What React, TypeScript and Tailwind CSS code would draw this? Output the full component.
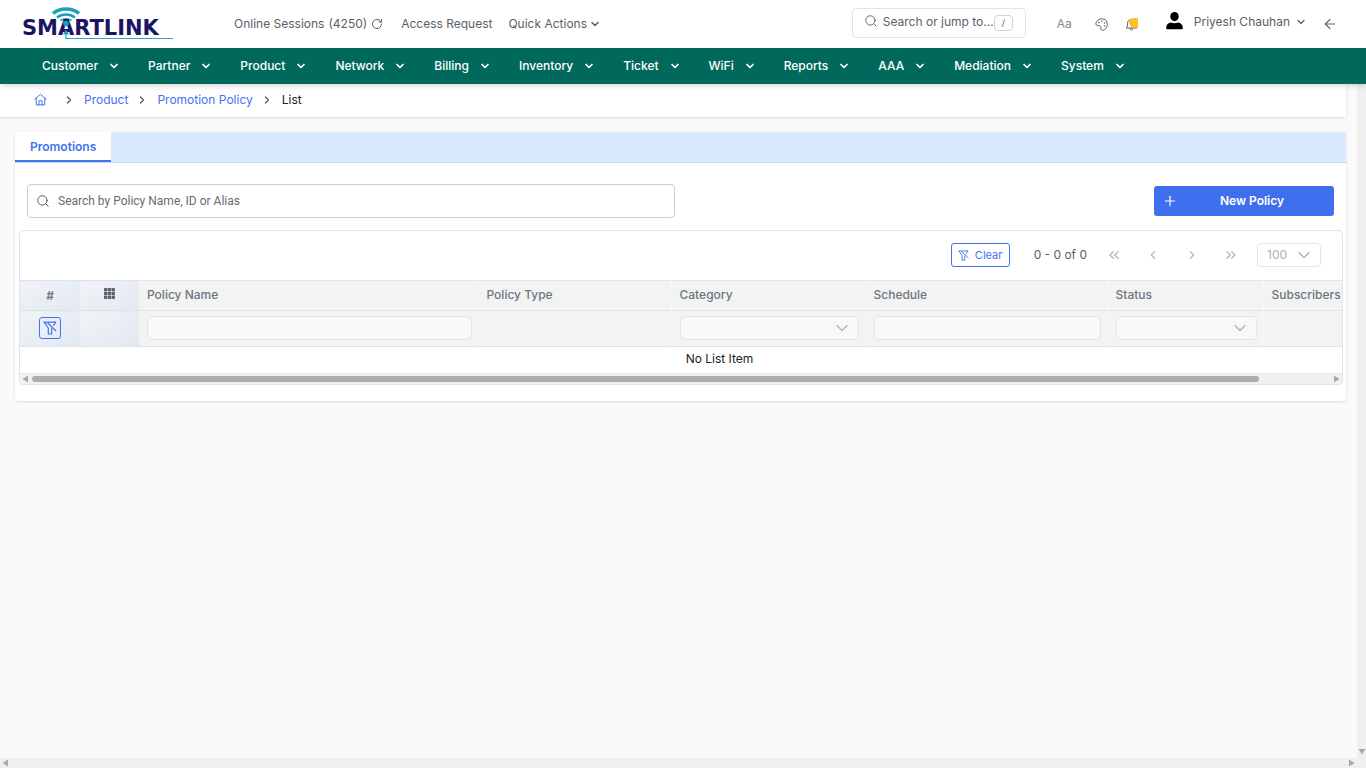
import type { ReactNode } from 'react';
import { ArrowLeft, ChevronDown, ChevronLeft, ChevronRight, ChevronsLeft, ChevronsRight, Plus, RotateCw, Search } from 'lucide-react';

const menuItems = [
  'Customer',
  'Partner',
  'Product',
  'Network',
  'Billing',
  'Inventory',
  'Ticket',
  'WiFi',
  'Reports',
  'AAA',
  'Mediation',
  'System',
];

const columns = [
  { name: 'Policy Name', width: 'w-[339px]', filter: 'text' },
  { name: 'Policy Type', width: 'w-[193px]', filter: 'none' },
  { name: 'Category', width: 'w-[194px]', filter: 'select' },
  { name: 'Schedule', width: 'w-[242px]', filter: 'text' },
  { name: 'Status', width: 'w-[156px]', filter: 'select' },
  { name: 'Subscribers', width: 'w-[156px]', filter: 'none' },
];

function Logo() {
  return (
    <svg width="162" height="36" viewBox="0 0 162 36" role="img" aria-label="Smartlink">
      <g fill="none" stroke="#1b9fbd">
        <path d="M40 7.5C47 1.500 59 1.500 66 7.5" strokeWidth="3.6" />
        <path d="M44 11.500C49 7.500 57 7.500 62 11.500" strokeWidth="2.4" />
        <path d="M47.500 14.500C50.500 12.300 55.500 12.300 58.500 14.500" strokeWidth="1.600" />
      </g>
      <text x="9" y="29" fontFamily="DejaVu Sans" fontWeight="700" fontSize="21" fill="#1b1464">
        SMARTLINK
      </text>
      <circle cx="53" cy="17.500" r="2.800" fill="#1b9fbd" />
      <path d="M53 26V32.500H160" fill="none" stroke="#2ba9c4" strokeWidth="1.200" />
      <path d="M50 28.500L53 23.500L56 28.500Z" fill="#1b9fbd" />
    </svg>
  );
}

function HomeIcon() {
  return (
    <svg width="13" height="13" viewBox="0 0 13 13" fill="none" stroke="currentColor" strokeLinecap="round" strokeLinejoin="round">
      <path d="M.7 6.300L6.500 1.300L12.300 6.300M2.300 5.200V11.900H10.700V5.200M5 11.700V7.700H8V11.700" />
    </svg>
  );
}

function FilterSlashIcon({ size }: { size: number }) {
  return (
    <svg width={size} height={size} viewBox="0 0 14 14" fill="none" stroke="currentColor" strokeWidth="1.200" strokeLinecap="round" strokeLinejoin="round">
      <path d="M5.500 1.200H12.800L10.500 4.300M3.500 1.200H1L5.300 7V13H8.700V7.500M4 1.200L12.800 9.800" />
    </svg>
  );
}

function PaletteIcon() {
  return (
    <svg width="13" height="13" viewBox="0 0 13 13" fill="none" stroke="currentColor" strokeLinejoin="round">
      <path d="M.8 5.600C1.400 2.500 4 .8 6.800.8C10 .8 12.300 3 12.300 6.200C12.300 9.800 10 12.300 7.300 12.300C5.300 12.300 6.400 9.800 5.400 8.300C4.300 6.900.4 8.200.8 5.600Z" />
      <g fill="currentColor" stroke="none">
        <circle cx="4" cy="4.600" r=".8" />
        <circle cx="6.800" cy="3.300" r=".8" />
        <circle cx="9.500" cy="5" r=".8" />
        <circle cx="9.600" cy="8" r=".8" />
      </g>
    </svg>
  );
}

function BellIcon() {
  return (
    <svg width="13" height="13" viewBox="0 0 13 13" fill="none" stroke="currentColor" strokeLinejoin="round">
      <path d="M1 10C2.500 9 2.500 7.500 2.500 5.500C2.500 3 4 1.500 6.500 1.500C9 1.500 10.500 3 10.500 5.500C10.500 7.500 10.500 9 12 10ZM5 10.300C5 12.500 8 12.500 8 10.300" />
    </svg>
  );
}

function UserIcon() {
  return (
    <svg width="17" height="18" viewBox="0 0 17 18" fill="#000" className="-mt-0.5">
      <ellipse cx="8.500" cy="4.600" rx="4.200" ry="4.600" />
      <path d="M.2 16.200C.2 12.500 2.500 10.800 5 10.500C7 11.600 10 11.600 12 10.500C14.500 10.800 16.800 12.500 16.800 16.200Q16.800 17.300 15.800 17.300H1.200Q.2 17.300 .2 16.200Z" />
    </svg>
  );
}

function GridIcon() {
  return (
    <svg width="11" height="11" viewBox="0 0 11 11" fill="#5d636c" className="mx-auto mb-1">
      {[0, 3.8, 7.6].map((x) => [0, 3.8, 7.6].map((y) => <rect key={`${x}-${y}`} x={x} y={y} width="3.3" height="3.3" rx=".4" />))}
    </svg>
  );
}

function ScrollArrow({ className }: { className: string }) {
  return (
    <svg width="6" height="8" viewBox="0 0 6 8" fill="#a9a9a9" className={className}>
      <path d="M6 .5V7.500L.5 4Z" />
    </svg>
  );
}

function PageButton({ label, children }: { label: string; children: ReactNode }) {
  return (
    <button type="button" aria-label={label} disabled className="flex h-6 w-6 items-center justify-center text-[#b4b7bc]">
      {children}
    </button>
  );
}

function SelectBox({ label }: { label: string }) {
  return (
    <div className="relative">
      <select aria-label={label} disabled className="block h-6 w-full appearance-none rounded border border-[#e3e5e6] bg-[#f8f8f8]" />
      <ChevronDown size={20} strokeWidth={1.7} className="pointer-events-none absolute top-0.5 right-[7px] text-[#b3b5b7]" />
    </div>
  );
}

function TopBar() {
  return (
    <header className="flex h-12 shrink-0 items-center bg-white pr-7 pl-[13px] text-[#5c6067]">
      <Logo />
      <div className="ml-[59px] flex items-center">
        <button type="button" className="flex items-center">
          <span>Online Sessions</span>
          <span className="ml-1">(4250)</span>
          <RotateCw size={12} strokeWidth={2} className="ml-1" />
        </button>
        <a href="#access" className="ml-[18px]">Access Request</a>
        <button type="button" className="ml-4 flex items-center gap-0.5">
          Quick Actions
          <ChevronDown size={12} strokeWidth={3} />
        </button>
      </div>
      <button type="button" className="mb-0.5 ml-auto flex h-[30px] w-[174px] items-center rounded border border-[#e1e3e6] pr-3 pl-[11px]">
        <Search size={14} strokeWidth={1.6} className="mb-1" />
        <span className="mb-0.5 ml-[5px]">Search or jump to...</span>
        <kbd className="ml-auto flex h-4 w-[19px] items-center justify-center rounded border border-[#cfd2d6] font-['Inter'] text-[9px]">/</kbd>
      </button>
      <button type="button" className="ml-[31px] text-[#83868b]">Aa</button>
      <button type="button" aria-label="Theme" className="ml-[23px]">
        <PaletteIcon />
      </button>
      <button type="button" aria-label="Notifications" className="relative ml-[17px]">
        <BellIcon />
        <span className="absolute top-0 right-0 h-[10px] w-[9px] rounded-tl-sm rounded-bl-md bg-[#fbc02d]" />
      </button>
      <button type="button" className="mb-1 ml-7 flex items-center">
        <UserIcon />
        <span className="ml-[11px]">Priyesh Chauhan</span>
        <ChevronDown size={12} strokeWidth={2.5} className="ml-[5px]" />
      </button>
      <button type="button" aria-label="Back" className="ml-[15px]">
        <ArrowLeft size={16} strokeWidth={1.8} />
      </button>
    </header>
  );
}

function MainMenu() {
  return (
    <nav className="z-10 flex h-9 shrink-0 items-center gap-7 bg-[#00695c] pl-[42px] font-medium text-white shadow-md">
      {menuItems.map((item) => (
        <button key={item} type="button" className="flex items-center gap-2.5">
          {item}
          <ChevronDown size={12} strokeWidth={3.5} />
        </button>
      ))}
    </nav>
  );
}

function Breadcrumb() {
  return (
    <nav aria-label="Breadcrumb" className="mr-[11px] flex h-[33px] items-center bg-white pb-0.5 pl-[34px] text-[#4272ee] shadow">
      <a href="#home" aria-label="Home">
        <HomeIcon />
      </a>
      <ChevronRight size={12} strokeWidth={2.5} className="ml-4 text-[#555]" />
      <a href="#product" className="ml-[9px]">Product</a>
      <ChevronRight size={12} strokeWidth={2.5} className="mr-[9px] ml-2 text-[#555]" />
      <a href="#policy">Promotion Policy</a>
      <ChevronRight size={12} strokeWidth={2.5} className="mr-[9px] ml-2 text-[#555]" />
      <span className="text-[#222]">List</span>
    </nav>
  );
}

function Paginator() {
  return (
    <div className="flex h-[49px] items-center justify-end pr-[21px] pb-px text-[#5c6067]">
      <button type="button" className="flex h-6 w-[59px] items-center justify-center gap-1.5 rounded-[3px] border border-[#4272ee] text-[11px] text-[#4272ee]">
        <FilterSlashIcon size={11} />
        Clear
      </button>
      <span className="ml-6">0 - 0 of 0</span>
      <div className="ml-[15px] flex gap-[15px]">
        <PageButton label="First page"><ChevronsLeft size={16} /></PageButton>
        <PageButton label="Previous page"><ChevronLeft size={14} /></PageButton>
        <PageButton label="Next page"><ChevronRight size={14} /></PageButton>
        <PageButton label="Last page"><ChevronsRight size={16} /></PageButton>
      </div>
      <div className="relative ml-[14px]">
        <select aria-label="Rows per page" disabled className="block h-6 w-16 appearance-none rounded border border-[#e4e6e8] pl-[9px] text-[#adb0b4] opacity-100">
          <option>100</option>
        </select>
        <ChevronDown size={20} strokeWidth={1.7} className="pointer-events-none absolute top-0.5 right-[7px] text-[#b3b5b7]" />
      </div>
    </div>
  );
}

function PolicyTable() {
  return (
    <div className="mr-[3px] ml-1 overflow-hidden rounded border border-[#e1e4ea]">
      <Paginator />
      <div className="overflow-hidden">
        <table className="w-full min-w-[1399px] table-fixed border-collapse">
          <thead className="bg-[#f2f4f4] text-left text-[#6f757e]">
            <tr className="h-[30px] border-y border-[#dfe2e8]">
              <th className="w-[60px] bg-linear-to-br from-[#f0f4f8] to-[#e2e8f0] text-center text-xs font-semibold">#</th>
              <th aria-label="Columns" className="w-[59px] bg-linear-to-br from-[#f0f4f8] to-[#e2e8f0]">
                <GridIcon />
              </th>
              {columns.map((column) => (
                <th key={column.name} className={`${column.width} border-r border-r-[#f5f6f6] pr-1.5 pb-0.5 pl-2 font-medium`}>
                  {column.name}
                </th>
              ))}
            </tr>
            <tr className="h-9 border-b border-[#dfe2e8]">
              <td className="bg-linear-to-br from-[#f0f4f8] to-[#e2e8f0] pb-0.5">
                <button type="button" aria-label="Clear filters" className="mx-auto flex h-[22px] w-[22px] items-center justify-center rounded-[3px] border border-[#4272ee] text-[#4272ee]">
                  <FilterSlashIcon size={14} />
                </button>
              </td>
              <td className="bg-linear-to-br from-[#f0f4f8] to-[#e2e8f0]" />
              {columns.map((column) => (
                <td key={column.name} className="border-r border-r-[#f5f6f6] pr-1.5 pb-0.5 pl-2">
                  {column.filter === 'text' && (
                    <input type="text" aria-label={column.name} disabled className="block h-6 w-full rounded border border-[#e3e5e6] bg-[#f8f8f8] px-2" />
                  )}
                  {column.filter === 'select' && <SelectBox label={column.name} />}
                </td>
              ))}
            </tr>
          </thead>
          <tbody>
            <tr className="h-[27px] border-b border-[#e4e6ea]">
              <td colSpan={8} className="pb-0.5 text-center text-[#222]">No List Item</td>
            </tr>
          </tbody>
        </table>
      </div>
      <div className="flex h-[10px] items-center gap-1 bg-[#f0f0f0] px-[2px]">
        <ScrollArrow className="" />
        <div className="flex-1">
          <div className="h-[6px] w-[94.5%] rounded-full bg-[#adadad]" />
        </div>
        <ScrollArrow className="rotate-180" />
      </div>
    </div>
  );
}

export default function App() {
  return (
    <div className="flex h-screen flex-col overflow-hidden bg-[#fafafa] font-['Inter',sans-serif] text-[12px] leading-4">
      <TopBar />
      <MainMenu />
      <div className="flex min-h-0 flex-1">
        <main className="min-w-0 flex-1 overflow-hidden">
          <Breadcrumb />
          <section className="mt-[15px] mr-[11px] ml-[15px] rounded bg-white pb-4 shadow">
            <div role="tablist" className="flex h-[31px] border-b border-[#c9d8ea] bg-[#dae9fe]">
              <button type="button" role="tab" aria-selected="true" className="border-b-2 border-[#4272ee] bg-white px-[15px] pt-px font-semibold text-[#4272ee]">
                Promotions
              </button>
            </div>
            <div className="flex items-center justify-between px-3 pt-[21px] pb-3">
              <label className="flex h-[34px] w-[49.6%] items-center rounded border border-[#c9ccd6] px-2 text-[#555b64]">
                <Search size={14} strokeWidth={1.7} />
                <input
                  type="text"
                  aria-label="Search policies"
                  placeholder="Search by Policy Name, ID or Alias"
                  className="ml-2 flex-1 font-['Roboto'] outline-none placeholder:text-[#666b73]"
                />
              </label>
              <button type="button" className="flex h-[30px] w-[180px] items-center rounded-[3px] bg-[#3f6fee] px-2 font-semibold text-white">
                <Plus size={16} strokeWidth={1.8} />
                <span className="flex-1">New Policy</span>
              </button>
            </div>
            <PolicyTable />
          </section>
        </main>
        <div className="flex w-[9px] items-end justify-center bg-[#f0f0f0] pb-[2px]">
          <ScrollArrow className="-rotate-90" />
        </div>
      </div>
      <div className="flex h-[10px] shrink-0 items-center justify-between bg-[#f0f0f0] pr-[11px] pl-[2px]">
        <ScrollArrow className="" />
        <ScrollArrow className="rotate-180" />
      </div>
    </div>
  );
}
